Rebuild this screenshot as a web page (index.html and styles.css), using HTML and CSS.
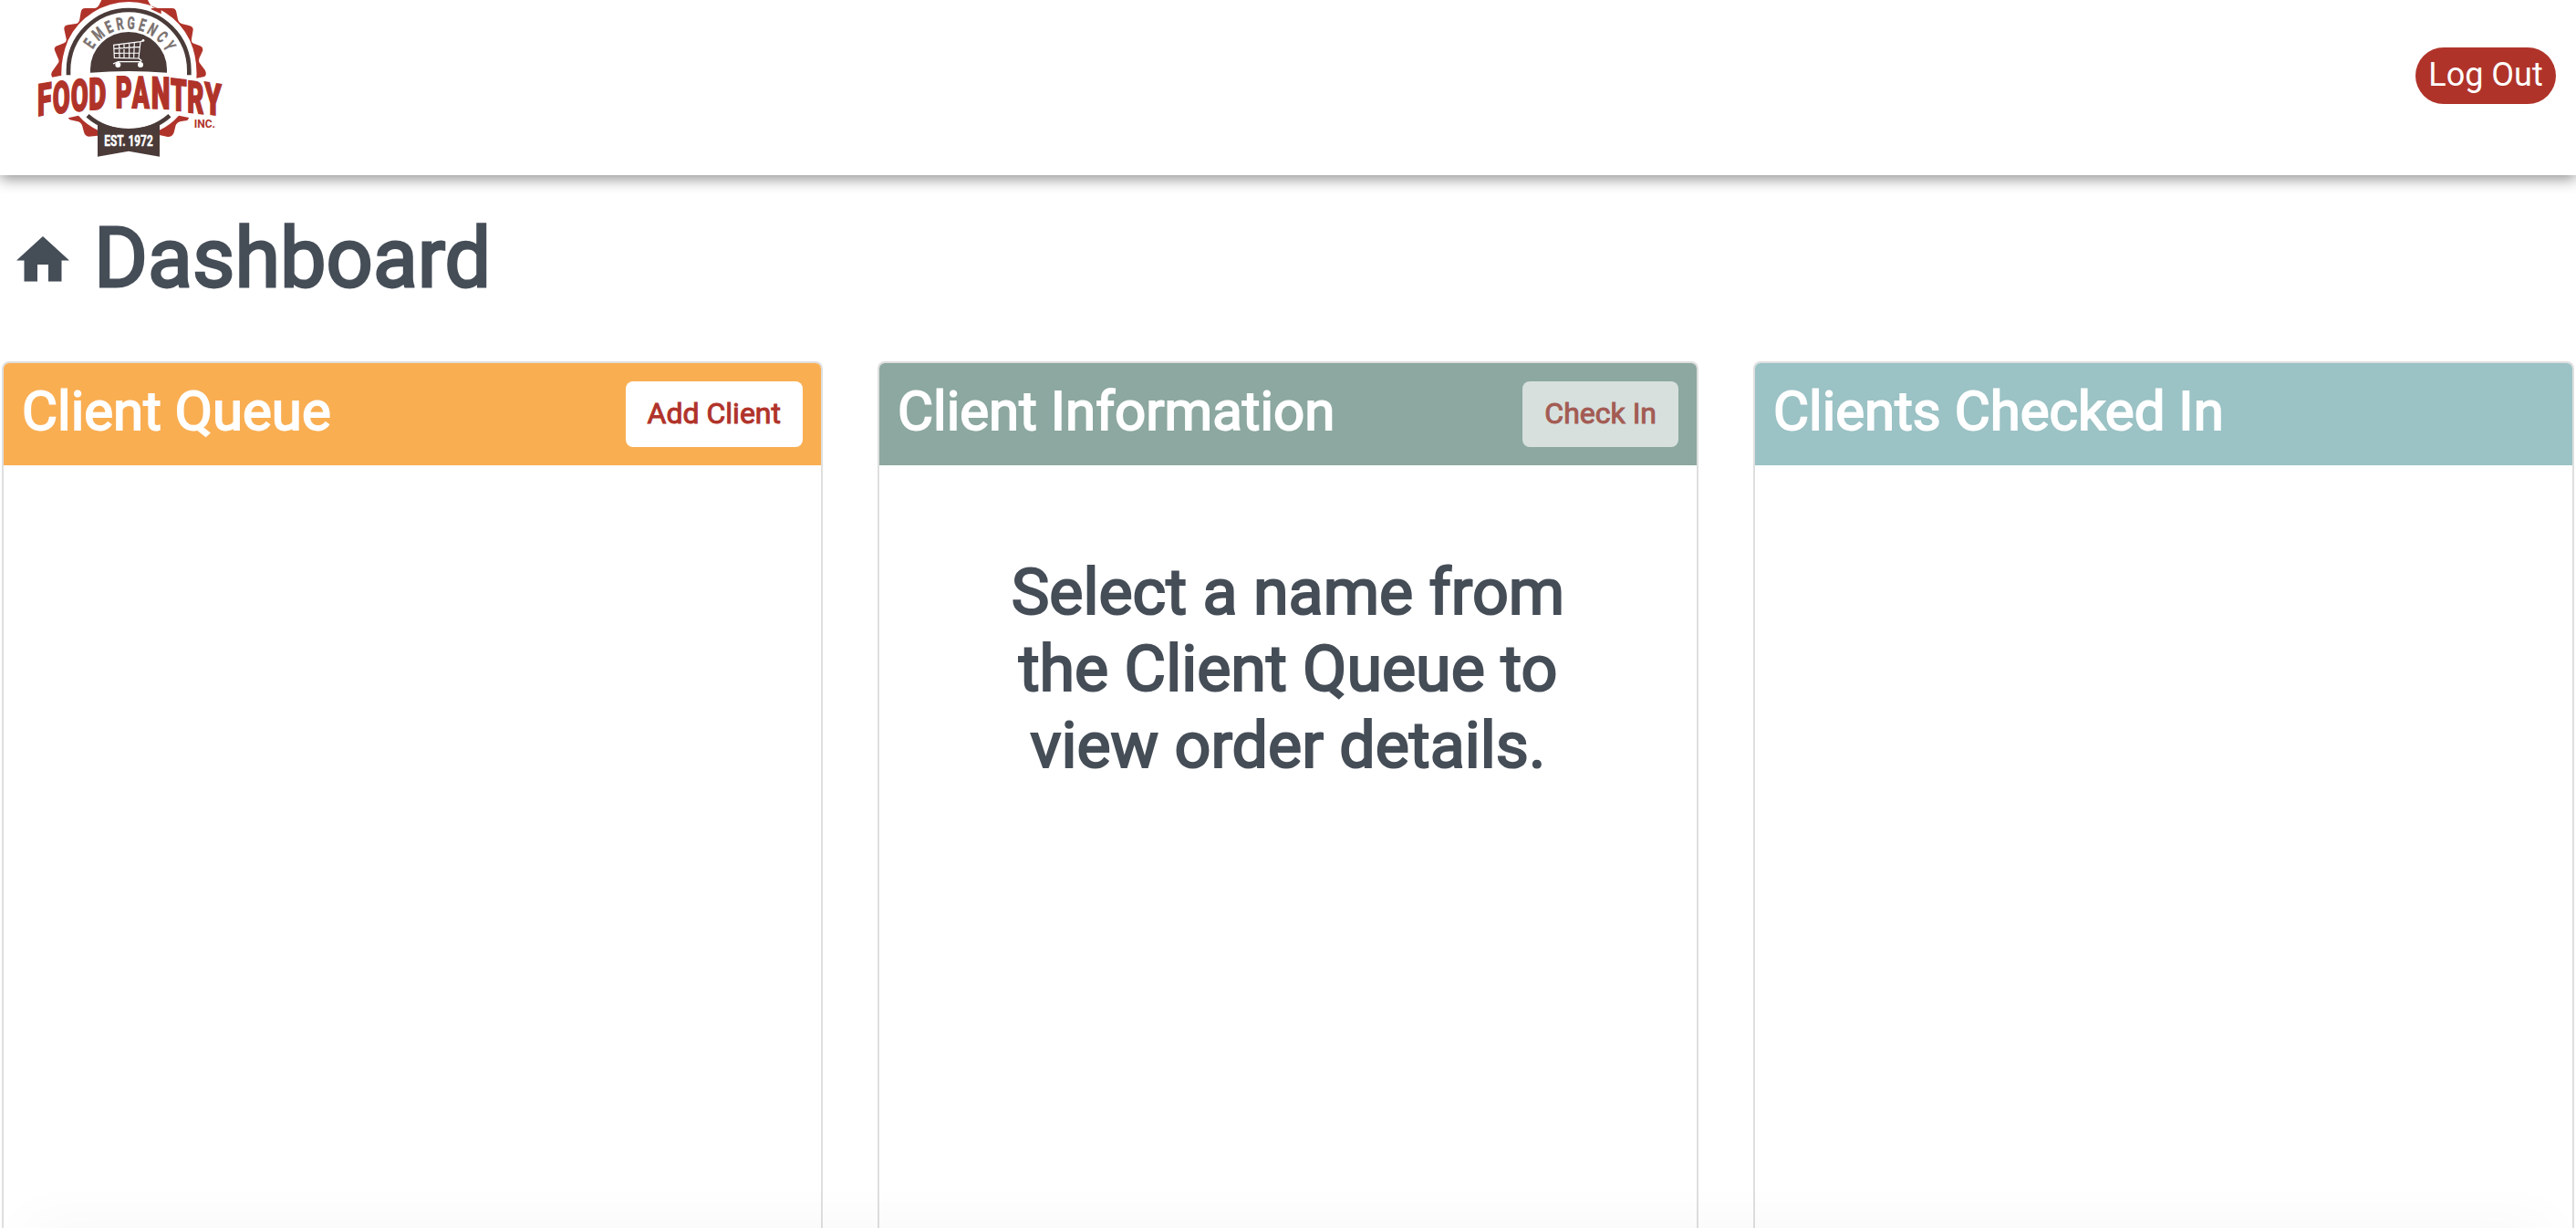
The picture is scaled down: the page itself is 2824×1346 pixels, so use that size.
FILE: index.html
```html
<!DOCTYPE html>
<html lang="en">
<head>
<meta charset="utf-8">
<title>Dashboard</title>
<link rel="stylesheet" href="styles.css">
</head>
<body>
<div class="page">
  <header class="topbar">
    <svg class="logo" viewBox="0 0 750 570" role="img" aria-label="Emergency Food Pantry Inc.">
      <g class="red">
        <path d="M112 254Q104 244 114 232L132 206Q136 200 130 190L120 166Q116 154 130 150L150 142Q160 138 158 128L151 96Q150 84 164 82L190 78Q200 76 202 64L206 40Q208 26 222 27L252 27Q262 26 268 12L276 -4H424L432 12Q440 27 456 27L504 27Q518 26 520 40L525 64Q528 76 540 79L562 84Q576 88 575 98L570 128Q568 140 578 143L598 151Q610 156 606 168L596 190Q592 200 597 208L614 230Q622 246 612 252L586 257Q590 190 564 132A222 222 0 0 0 164 132Q140 190 142 248Z"/>
        <path d="M440 27H470V46L436 30Z"/>
        <path d="M164 388L198 380Q224 410 262 428V446L232 449Q220 448 216 434L210 412Q206 400 190 398L170 394ZM562 387L528 380Q502 410 464 428V444L492 450Q508 450 512 436L518 412Q522 400 540 398L556 396Z"/>
      </g>
      <g class="ring">
        <path d="M165 247V232A198.5 199 0 0 1 562 232V247"/>
        <path d="M228 380A206 206 0 0 0 498 380"/>
      </g>
      <path class="dark" d="M237 239V228A126 123 0 0 1 489 228V239Q363 229 237 239ZM261 400Q363 446 465 400V515L363 497L261 515Z"/>
      <g class="cart">
        <path d="M413 133L402 137L396 191L405 199L402 203H328L312 210M403 137L314 148L316 190L396 192M332 146L333 190M348 144V190M365 142V190M382 140L380 190M315 160L400 154M315 175L398 174"/>
        <circle cx="328" cy="213" r="9"/><circle cx="402" cy="213" r="9"/><circle cx="411" cy="133" r="4"/>
      </g>
      <g class="arc-text">
        <text transform="rotate(-55.6 363 232) translate(363 95) scale(.65 1)">E</text>
        <text transform="rotate(-39.5 363 232) translate(363 95) scale(.65 1)">M</text>
        <text transform="rotate(-24.3 363 232) translate(363 95) scale(.65 1)">E</text>
        <text transform="rotate(-10.6 363 232) translate(363 95) scale(.65 1)">R</text>
        <text transform="rotate(3 363 232) translate(363 95) scale(.65 1)">G</text>
        <text transform="rotate(16.8 363 232) translate(363 95) scale(.65 1)">E</text>
        <text transform="rotate(30.2 363 232) translate(363 95) scale(.65 1)">N</text>
        <text transform="rotate(44.9 363 232) translate(363 95) scale(.65 1)">C</text>
        <text transform="rotate(59 363 232) translate(363 95) scale(.65 1)">Y</text>
      </g>
      <g class="name">
        <text transform="matrix(.59 -.11 0 1 63 382)">F</text>
        <text transform="matrix(.57 -.06 0 1 113 374)">O</text>
        <text transform="matrix(.57 -.05 0 1 173 367)">O</text>
        <text transform="matrix(.61 -.03 0 1 232 361)">D</text>
        <text transform="matrix(.57 -.01 0 1 320 355)">P</text>
        <text transform="matrix(.58 .01 0 1 374 355)">A</text>
        <text transform="matrix(.61 .02 0 1 437 356)">N</text>
        <text transform="matrix(.58 .06 0 1 501 361)">T</text>
        <text transform="matrix(.58 .07 0 1 556 368)">R</text>
        <text transform="matrix(.61 .09 0 1 613 373)">Y</text>
      </g>
      <text class="inc" x="578" y="420" textLength="70" lengthAdjust="spacingAndGlyphs">INC.</text>
      <text class="est" x="283" y="481" textLength="160" lengthAdjust="spacingAndGlyphs">EST. 1972</text>
    </svg>
    <button class="logout">Log Out</button>
  </header>
  <main>
    <h1 class="heading faux">
      <svg class="home" viewBox="0 0 58 50"><path d="M29 0L58 26.5H49.5V49.5H35V31H23V49.5H8.5V26.5H0Z"/></svg>
      <span>Dashboard</span>
    </h1>
    <div class="columns">
      <section class="card">
        <div class="card-head queue"><h2 class="faux">Client Queue</h2><button class="action faux">Add Client</button></div>
      </section>
      <section class="card">
        <div class="card-head info"><h2 class="faux">Client Information</h2><button class="action faux" disabled>Check In</button></div>
        <p class="message faux">Select a name from the Client Queue to view order details.</p>
      </section>
      <section class="card">
        <div class="card-head checked"><h2 class="faux">Clients Checked In</h2></div>
      </section>
    </div>
  </main>
  <div class="bottom-shade"></div>
</div>
</body>
</html>
```
FILE: styles.css
```css
* { box-sizing: border-box; }
body { margin: 0; background: #fff; font-family: Roboto, sans-serif; color: #454d57; }
.page { position: relative; display: flex; flex-direction: column; height: 1346px; overflow: hidden; }
.topbar { height: 192px; flex: none; display: flex; justify-content: space-between; align-items: flex-start; padding: 0 22px 0 20px; background: #fff; box-shadow: 0 4px 15px rgba(0, 0, 0, .44); }
.logo { width: 250px; height: 190px; display: block; }
.red, .name, .inc { fill: #b0332a; }
.dark { fill: #4a3b39; }
.ring path { fill: none; stroke: #4a3b39; stroke-width: 14; }
.cart path { fill: none; stroke: #fff; stroke-width: 3.5; }
.cart circle { fill: #fff; }
.arc-text { font: 700 56px Roboto, sans-serif; fill: #7a706e; stroke: #7a706e; stroke-width: 1.5; text-anchor: middle; }
.name { font: 900 145px Roboto, sans-serif; stroke: #b0332a; stroke-width: 5; }
.inc { font: 700 36px Roboto, sans-serif; }
.est { font: 700 51px Roboto, sans-serif; fill: #fff; stroke: #fff; stroke-width: 1.5; }
.logout { margin-top: 52px; width: 154px; height: 62px; border: 0; border-radius: 31px; padding: 0 0 2px; background: #b0332a; color: #fff; font: 400 36px/60px Roboto, sans-serif; }
/* thickens the regular weight */
.faux { font-weight: 400; -webkit-text-stroke: .031em currentColor; }
main { flex: 1; display: flex; flex-direction: column; padding: 0 2px; min-height: 0; }
.heading { margin: 0; height: 204px; padding: 38px 0 0 16px; display: flex; font-size: 90px; line-height: 108px; }
.home { width: 58px; height: 50px; margin: 29px 27px 0 0; fill: #454d57; stroke: none; }
.columns { flex: 1; display: grid; grid-template-columns: repeat(3, 1fr); gap: 60px; }
.card { border: 2px solid #dfdfdf; border-bottom: 0; border-radius: 8px 8px 0 0; overflow: hidden; }
.card-head { height: 112px; padding: 20px; display: flex; justify-content: space-between; align-items: flex-start; color: #fff; }
.queue { background: #f9ae52; }
.info { background: #8ca8a0; }
.checked { background: #9bc2c5; }
h2 { margin: 0; font-size: 60px; line-height: 66px; }
.action { height: 72px; padding: 0 24px 2px; border: 0; border-radius: 8px; background: #fff; color: #b0332a; font-family: Roboto, sans-serif; font-size: 32px; line-height: 70px; }
.action:disabled { opacity: .65; }
.message { width: 640px; margin: 97px auto 0; text-align: center; font-size: 70px; line-height: 84px; }
.bottom-shade { position: absolute; left: 30px; right: 30px; bottom: -30px; height: 30px; box-shadow: 0 0 60px rgba(0, 0, 0, .05); }
```
